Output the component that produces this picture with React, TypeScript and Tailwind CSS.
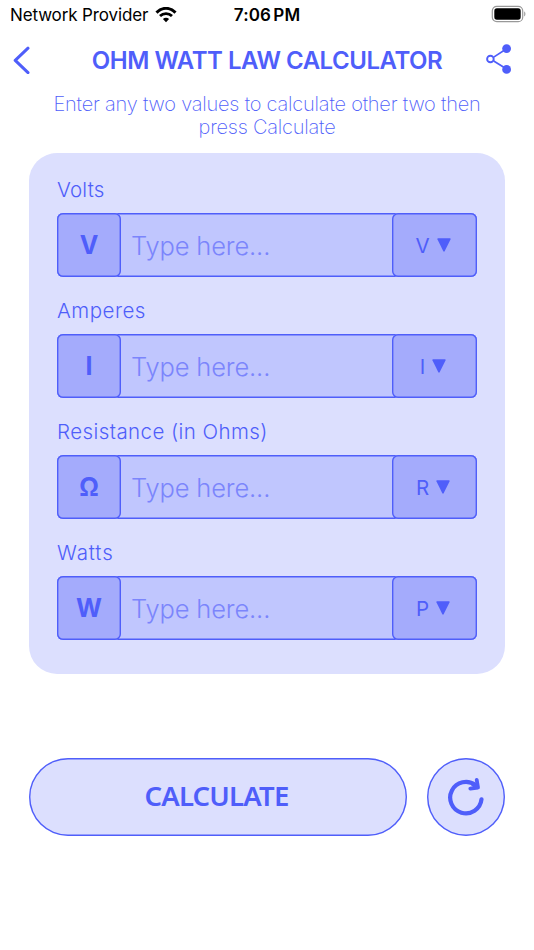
import React, { useState } from 'react'

interface Field {
  label: string
  symbol: string
  unit: string
  labelClass: string
}

const fields: Field[] = [
  { label: 'Volts', symbol: 'V', unit: 'V', labelClass: 'tracking-[0.2px]' },
  { label: 'Amperes', symbol: 'I', unit: 'I', labelClass: 'tracking-[0.5px]' },
  { label: 'Resistance (in Ohms)', symbol: 'Ω', unit: 'R', labelClass: 'tracking-[0.43px]' },
  { label: 'Watts', symbol: 'W', unit: 'P', labelClass: 'tracking-[0.9px]' },
]

const StatusBar: React.FC = () => (
  <div className="grid h-[30px] grid-cols-3 items-center pr-[8px] pl-[10px] text-[17px] text-black">
    <div className="flex items-center gap-[6.5px] whitespace-nowrap">
      <span className="pt-[2px] tracking-[-0.13px]">Network Provider</span>
      <svg width="22" height="16" viewBox="0 0 22 16" fill="none" stroke="currentColor" className="shrink-0">
        <path d="M1.5 5.6 C7 -0.1 15 -0.1 20.5 5.6" strokeWidth="3" />
        <path d="M5 9.1 C8.4 5.7 13.6 5.7 17 9.1" strokeWidth="2.8" />
        <path d="M11 15.2 L7.9 12.1 C9.7 10.4 12.3 10.4 14.1 12.1 Z" fill="currentColor" stroke="none" />
      </svg>
    </div>
    <span className="pt-[2px] pr-[2px] text-center font-semibold tracking-[0.1px] [word-spacing:-2px]">7:06 PM</span>
    <svg width="35" height="18" viewBox="0 0 35 18" className="-mt-[2px] justify-self-end">
      <rect x="1.3" y="1.3" width="30.4" height="15.4" rx="4.5" fill="none" stroke="#999" strokeWidth="1.2" />
      <rect x="3.3" y="3.3" width="26.4" height="11.4" rx="2.6" fill="#000" />
      <path d="M33.2 6.6 C34.8 7.2 34.8 10.8 33.2 11.4 Z" fill="#999" />
    </svg>
  </div>
)

const Header: React.FC = () => (
  <header className="flex h-[60px] items-center pr-[22px] pl-[12px]">
    <button aria-label="Back">
      <svg width="19" height="28" viewBox="0 0 19 28" fill="none" stroke="currentColor" strokeWidth="3" strokeLinecap="round" strokeLinejoin="round">
        <path d="M16 2.2 L3.2 14.4 L16 26.6" />
      </svg>
    </button>
    <h1 className="flex-1 pt-[2px] pl-[17px] text-center text-[24px] font-semibold tracking-[-0.48px] whitespace-nowrap">
      OHM WATT LAW CALCULATOR
    </h1>
    <button aria-label="Share" className="-mt-[2px]">
      <svg width="26" height="32" viewBox="0 0 26 32" fill="none" stroke="currentColor">
        <path d="M7.7 14.1 L21 5.5 M7.7 18 L21 26.2" strokeWidth="1.7" />
        <circle cx="4.4" cy="16" r="3.3" strokeWidth="1.9" />
        <circle cx="20.6" cy="5.6" r="4.4" fill="currentColor" stroke="none" />
        <circle cx="20.6" cy="26.4" r="4.4" fill="currentColor" stroke="none" />
      </svg>
    </button>
  </header>
)

const FieldRow: React.FC<{ field: Field }> = ({ field }) => {
  const [value, setValue] = useState('')

  return (
    <div>
      <label className={`block h-[36px] pt-[1px] text-[20.5px] leading-[24px] font-light ${field.labelClass}`}>
        {field.label}
      </label>
      <div className="flex h-[64px] rounded-[6px] bg-[#c0c6fe] shadow-[inset_0_0_0_1.4px_#4f5efa]">
        <span className="flex w-[64px] shrink-0 items-center justify-center rounded-[6px] bg-[#a4abfc] pt-[2px] text-[25px] font-bold shadow-[inset_0_0_0_1.4px_#4f5efa]">
          {field.symbol}
        </span>
        <input
          className="min-w-0 flex-1 bg-transparent pt-[2px] pl-[10px] text-[25.5px] font-light tracking-[-0.15px] outline-none placeholder:text-[#7b85fc]"
          placeholder="Type here..."
          value={value}
          onChange={(e) => setValue(e.target.value)}
        />
        <button className="flex w-[85px] shrink-0 items-center justify-center gap-[7px] rounded-[6px] bg-[#a4abfc] pr-[3px] text-[20.5px] font-normal shadow-[inset_0_0_0_1.4px_#4f5efa]">
          <span className="pt-[2px]">{field.unit}</span>
          <svg width="14" height="14" viewBox="0 0 14 14" fill="currentColor">
            <path d="M1 0.3 H13 Q14 0.3 13.6 1.2 L7.8 13 Q7 14.3 6.2 13 L0.4 1.2 Q0 0.3 1 0.3 Z" />
          </svg>
        </button>
      </div>
    </div>
  )
}

const App: React.FC = () => {
  return (
    <div className="h-[950px] w-[534px] overflow-hidden bg-white font-['Inter',sans-serif] text-[#4f5efa]">
      <StatusBar />
      <Header />
      <p className="mx-auto h-[63px] w-[450px] pt-[2.6px] text-center text-[20px] leading-[23.5px] font-extralight tracking-[-0.21px]">
        Enter any two values to calculate other two then press Calculate
      </p>
      <main className="mx-[29px] flex h-[521px] flex-col gap-[21px] rounded-[28px] bg-[#dcdffe] px-[28px] pt-[24px]">
        {fields.map((field) => (
          <FieldRow key={field.label} field={field} />
        ))}
      </main>
      <div className="mx-[29px] mt-[84px] flex gap-[20px]">
        <button className="h-[78px] flex-1 rounded-full bg-[#dcdffe] pr-[3px] pb-[2px] font-['Noto_Sans',sans-serif] text-[27.5px] font-semibold tracking-[-0.8px] shadow-[inset_0_0_0_1.4px_#4f5efa]">
          CALCULATE
        </button>
        <button
          aria-label="Reset"
          className="flex h-[78px] w-[78px] items-center justify-center rounded-full bg-[#dcdffe] shadow-[inset_0_0_0_1.4px_#4f5efa]"
        >
          <svg width="40" height="40" viewBox="0 0 40 40" fill="none" stroke="currentColor" strokeLinecap="round" strokeLinejoin="round">
            <path d="M35.5 22.3 A15.7 15.7 0 1 1 29.5 8.2" strokeWidth="4.2" />
            <path d="M30.7 2.8 L32 10.5 L24.3 11.6" strokeWidth="3.8" />
            <path d="M27 7.4 L31 10" strokeWidth="4" />
          </svg>
        </button>
      </div>
    </div>
  )
}

export default App
